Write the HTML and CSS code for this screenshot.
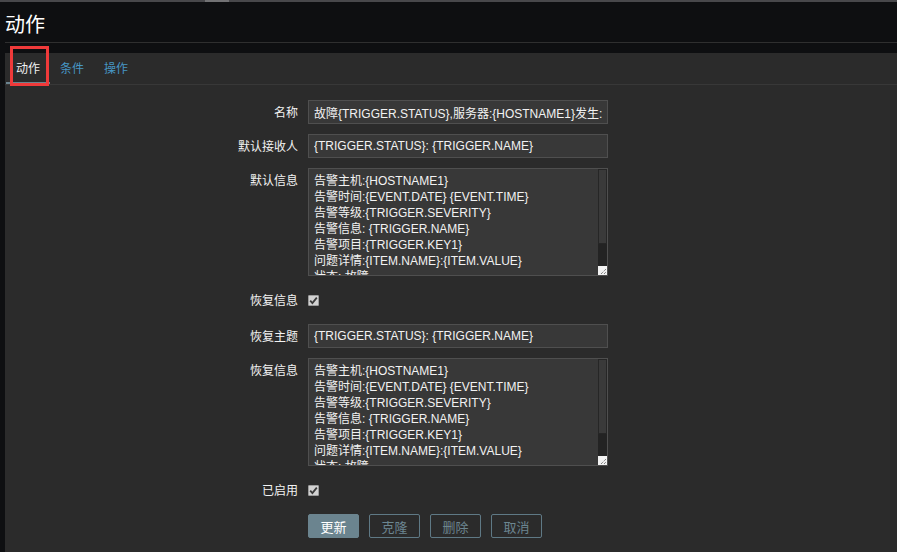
FILE: index.html
```html
<!DOCTYPE html>
<html lang="zh-CN">
<head>
    <meta charset="UTF-8">
    <meta name="viewport" content="width=device-width, initial-scale=1.0">
    <title>动作</title>
    <link rel="stylesheet" href="styles.css">
</head>
<body>
    <div class="topbar"><span class="topbar-thumb"></span></div>

    <header class="page-header">
        <h1>动作</h1>
    </header>

    <main class="panel">
        <ul class="tabs">
            <li class="tab active">动作<span class="mark"></span></li>
            <li class="tab">条件</li>
            <li class="tab">操作</li>
        </ul>

        <form class="action-form">
            <label class="form-label" for="name">名称</label>
            <div class="form-field">
                <input type="text" id="name" value="故障{TRIGGER.STATUS},服务器:{HOSTNAME1}发生: {TRIGGER.NAME}故障!">
            </div>

            <label class="form-label" for="defSubject">默认接收人</label>
            <div class="form-field">
                <input type="text" id="defSubject" value="{TRIGGER.STATUS}: {TRIGGER.NAME}">
            </div>

            <label class="form-label" for="defMessage">默认信息</label>
            <div class="form-field">
                <div class="textarea-box">
                    <textarea id="defMessage">告警主机:{HOSTNAME1}
告警时间:{EVENT.DATE} {EVENT.TIME}
告警等级:{TRIGGER.SEVERITY}
告警信息: {TRIGGER.NAME}
告警项目:{TRIGGER.KEY1}
问题详情:{ITEM.NAME}:{ITEM.VALUE}
状态: 故障
事件ID:{EVENT.ID}</textarea>
                    <div class="scrollbar">
                        <div class="scroll-thumb"></div>
                        <div class="scroll-track"></div>
                        <div class="resizer"><svg width="9" height="9" viewBox="0 0 9 9"><path d="M3 8 L8 3 M6 8 L8 6" stroke="#555" stroke-width="1" stroke-dasharray="1 1"/></svg></div>
                    </div>
                </div>
            </div>

            <label class="form-label check-label">恢复信息</label>
            <div class="form-field check-field">
                <span class="checkbox"><svg width="9" height="9" viewBox="0 0 9 9"><path d="M1.2 4.6 L3.4 7 L7.8 1.6" fill="none" stroke="#3a3a3a" stroke-width="1.8"/></svg></span>
            </div>

            <label class="form-label" for="recSubject">恢复主题</label>
            <div class="form-field">
                <input type="text" id="recSubject" value="{TRIGGER.STATUS}: {TRIGGER.NAME}">
            </div>

            <label class="form-label" for="recMessage">恢复信息</label>
            <div class="form-field">
                <div class="textarea-box">
                    <textarea id="recMessage">告警主机:{HOSTNAME1}
告警时间:{EVENT.DATE} {EVENT.TIME}
告警等级:{TRIGGER.SEVERITY}
告警信息: {TRIGGER.NAME}
告警项目:{TRIGGER.KEY1}
问题详情:{ITEM.NAME}:{ITEM.VALUE}
状态: 故障
事件ID:{EVENT.ID}</textarea>
                    <div class="scrollbar">
                        <div class="scroll-thumb"></div>
                        <div class="scroll-track"></div>
                        <div class="resizer"><svg width="9" height="9" viewBox="0 0 9 9"><path d="M3 8 L8 3 M6 8 L8 6" stroke="#555" stroke-width="1" stroke-dasharray="1 1"/></svg></div>
                    </div>
                </div>
            </div>

            <label class="form-label check-label">已启用</label>
            <div class="form-field check-field">
                <span class="checkbox"><svg width="9" height="9" viewBox="0 0 9 9"><path d="M1.2 4.6 L3.4 7 L7.8 1.6" fill="none" stroke="#3a3a3a" stroke-width="1.8"/></svg></span>
            </div>

            <div></div>
            <div class="form-buttons">
                <button type="button" class="btn primary">更新</button>
                <button type="button" class="btn">克隆</button>
                <button type="button" class="btn">删除</button>
                <button type="button" class="btn">取消</button>
            </div>
        </form>
    </main>
</body>
</html>
```

FILE: styles.css
```css
* {
    box-sizing: border-box;
}
body {
    margin: 0;
    min-height: 100vh;
    display: flex;
    flex-direction: column;
    background-color: #0e0f11;
    color: #f2f2f2;
    font-family: 'Liberation Sans', Arial, 'Noto Sans CJK SC', sans-serif;
    font-size: 12px;
}
.topbar {
    height: 2px;
    background-color: #48484b;
}
.topbar-thumb {
    display: block;
    width: 24px;
    height: 2px;
    margin-left: 205px;
    background-color: #727274;
}
.page-header {
    margin-left: 5px;
    margin-bottom: 10px;
    border-bottom: 1px solid #2f2f2f;
}
.page-header h1 {
    margin: 0;
    padding: 10px 0 4px;
    font-size: 20px;
    line-height: 26px;
    font-weight: normal;
    color: #ffffff;
}
.panel {
    flex: 1;
    margin-left: 5px;
    background-color: #2b2b2b;
}
.tabs {
    display: flex;
    margin: 0;
    padding: 0 0 0 1px;
    list-style: none;
    border-bottom: 1px solid #383838;
}
.tab {
    position: relative;
    padding: 9px 10px 8px;
    line-height: 14px;
    color: #4796c4;
}
.tab.active {
    color: #f2f2f2;
    box-shadow: inset 0 -2px 0 #6b848f;
}
.tab .mark {
    position: absolute;
    left: 4px;
    top: -7px;
    width: 39px;
    height: 40px;
    border: 3px solid #ef3a3a;
}
.action-form {
    display: grid;
    grid-template-columns: 293px 300px;
    column-gap: 10px;
    row-gap: 10px;
    padding-top: 15px;
}
.form-label {
    text-align: right;
    padding-top: 6px;
    line-height: 14px;
    color: #f2f2f2;
}
.check-label {
    padding-top: 8px;
}
.check-field {
    height: 28px;
    display: flex;
    align-items: center;
}
.form-field input {
    display: block;
    width: 300px;
    height: 24px;
    margin: 0;
    padding: 0 5px;
    background-color: #383838;
    border: 1px solid #4f4f4f;
    color: #f2f2f2;
    font-family: inherit;
    font-size: 12px;
}
.textarea-box {
    display: flex;
    width: 300px;
    height: 108px;
    background-color: #383838;
    border: 1px solid #4f4f4f;
}
.textarea-box textarea {
    flex: 1;
    margin: 0;
    padding: 4px 5px;
    border: none;
    background: transparent;
    color: #f2f2f2;
    font-family: inherit;
    font-size: 12px;
    line-height: 16px;
    resize: none;
    overflow: hidden;
}
.scrollbar {
    display: flex;
    flex-direction: column;
    width: 9px;
}
.scroll-thumb {
    height: 75px;
    background-color: #3a3a3a;
    border: 1px solid #262626;
}
.scroll-track {
    flex: 1;
    background-color: #232323;
}
.resizer {
    height: 9px;
    background-color: #f2f2f2;
}
.resizer svg {
    display: block;
}
.checkbox {
    display: flex;
    align-items: center;
    justify-content: center;
    width: 11px;
    height: 11px;
    margin-top: 1px;
    background-color: #d2d2d2;
    border: 1px solid #9c9c9c;
    border-radius: 1px;
}
.form-buttons {
    display: flex;
    gap: 10px;
}
.btn {
    height: 24px;
    padding: 0 11.5px;
    border: 1px solid #5f7985;
    border-radius: 2px;
    background-color: transparent;
    color: #6b8590;
    font-family: inherit;
    font-size: 13px;
    cursor: pointer;
}
.btn.primary {
    background-color: #6b848f;
    border-color: #6b848f;
    color: #ffffff;
}
```
